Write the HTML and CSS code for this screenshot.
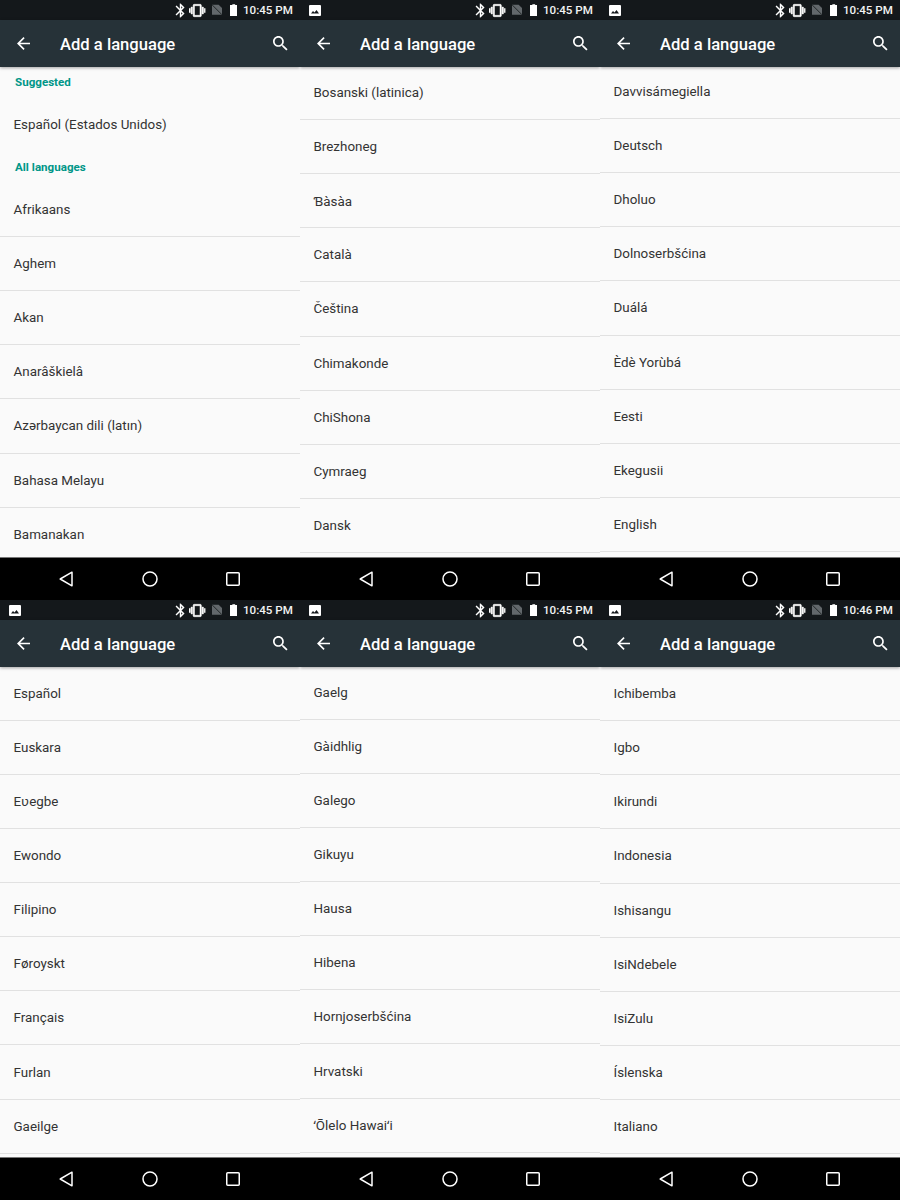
FILE: index.html
```html
<!DOCTYPE html>
<html lang="en">
<head>
<meta charset="utf-8">
<title>Add a language</title>
<link rel="stylesheet" href="styles.css">
</head>
<body>
<svg class="defs" width="0" height="0" aria-hidden="true">
  <symbol id="i-back" viewBox="4 4 16 16"><path d="M20 11H7.83l5.59-5.59L12 4l-8 8 8 8 1.41-1.41L7.83 13H20v-2z"/></symbol>
  <symbol id="i-search" viewBox="3 3 18 18"><path d="M15.5 14h-.79l-.28-.27C15.41 12.59 16 11.11 16 9.5 16 5.91 13.09 3 9.5 3S3 5.91 3 9.5 5.91 16 9.5 16c1.61 0 3.09-.59 4.23-1.57l.27.28v.79l5 4.99L20.49 19l-4.99-5zm-6 0C7.01 14 5 11.99 5 9.5S7.01 5 9.5 5 14 7.01 14 9.5 11.99 14 9.5 14z"/></symbol>
  <symbol id="i-bt" viewBox="0 0 24 24"><path d="M17.71 7.71L12 2h-1v7.59L6.41 5 5 6.41 10.59 12 5 17.59 6.41 19 11 14.41V22h1l5.71-5.71-4.3-4.29 4.3-4.29zM13 5.83l1.88 1.88L13 9.59V5.83zm1.88 10.46L13 18.17v-3.76l1.88 1.88z"/></symbol>
  <symbol id="i-vib" viewBox="0 0 24 24"><path stroke="#fff" stroke-width=".7" d="M0 15h2V9H0v6zm3 2h2V7H3v10zm19-8v6h2V9h-2zm-3 8h2V7h-2v10zM16.5 3h-9C6.67 3 6 3.67 6 4.5v15c0 .83.67 1.5 1.5 1.5h9c.83 0 1.5-.67 1.5-1.5v-15c0-.83-.67-1.5-1.5-1.5zM16 19H8V5h8v14z"/></symbol>
  <symbol id="i-sim" viewBox="0 0 12 12"><path fill="#62676b" d="M0 0h8l4 4v8H0z"/><path fill="none" stroke="#14181b" stroke-width="1" d="M0 0l12 12"/></symbol>
  <symbol id="i-bat" viewBox="0 0 8 13"><path d="M2.5 0h3v1H8v12H0V1h2.5z"/></symbol>
  <symbol id="i-pic" viewBox="0 0 12 11"><path fill="#fff" d="M1 0h10a1 1 0 0 1 1 1v9a1 1 0 0 1-1 1H1a1 1 0 0 1-1-1V1a1 1 0 0 1 1-1z"/><path fill="#14181b" d="M2 8.5l2-2.5 1.5 1.5L7.5 5 10 8.5z"/></symbol>
  <symbol id="i-tri" viewBox="0 0 14 16"><path fill="none" stroke="#fff" stroke-width="1.5" stroke-linejoin="round" d="M13 1.2v13.6L1.2 8z"/></symbol>
  <symbol id="i-circle" viewBox="0 0 16 16"><circle cx="8" cy="8" r="7" fill="none" stroke="#fff" stroke-width="1.5"/></symbol>
  <symbol id="i-square" viewBox="0 0 14 14"><rect x=".75" y=".75" width="12.5" height="12.5" rx="1" fill="none" stroke="#fff" stroke-width="1.5"/></symbol>
</svg>

<main class="grid">

<section class="phone">
  <div class="status">
    <span class="spacer"></span>
    <svg class="s-bt"><use href="#i-bt"/></svg><svg class="s-vib"><use href="#i-vib"/></svg><svg class="s-sim"><use href="#i-sim"/></svg><svg class="s-bat"><use href="#i-bat"/></svg><span class="time">10:45 PM</span>
  </div>
  <header class="toolbar"><svg class="back"><use href="#i-back"/></svg><h1>Add a language</h1><svg class="search"><use href="#i-search"/></svg></header>
  <ul class="list">
    <li class="head first">Suggested</li>
    <li class="row plain">Español (Estados Unidos)</li>
    <li class="head second">All languages</li>
    <li class="row">Afrikaans</li>
    <li class="row">Aghem</li>
    <li class="row">Akan</li>
    <li class="row">Anarâškielâ</li>
    <li class="row">Azərbaycan dili (latın)</li>
    <li class="row">Bahasa Melayu</li>
    <li class="row">Bamanakan</li>
  </ul>
  <nav class="nav"><svg class="n-tri"><use href="#i-tri"/></svg><svg class="n-circle"><use href="#i-circle"/></svg><svg class="n-square"><use href="#i-square"/></svg></nav>
</section>

<section class="phone">
  <div class="status">
    <svg class="s-pic"><use href="#i-pic"/></svg><span class="spacer"></span>
    <svg class="s-bt"><use href="#i-bt"/></svg><svg class="s-vib"><use href="#i-vib"/></svg><svg class="s-sim"><use href="#i-sim"/></svg><svg class="s-bat"><use href="#i-bat"/></svg><span class="time">10:45 PM</span>
  </div>
  <header class="toolbar"><svg class="back"><use href="#i-back"/></svg><h1>Add a language</h1><svg class="search"><use href="#i-search"/></svg></header>
  <ul class="list scroll-b">
    <li class="row">Bosanski (latinica)</li>
    <li class="row">Brezhoneg</li>
    <li class="row">Ɓàsàa</li>
    <li class="row">Català</li>
    <li class="row">Čeština</li>
    <li class="row">Chimakonde</li>
    <li class="row">ChiShona</li>
    <li class="row">Cymraeg</li>
    <li class="row">Dansk</li>
  </ul>
  <nav class="nav"><svg class="n-tri"><use href="#i-tri"/></svg><svg class="n-circle"><use href="#i-circle"/></svg><svg class="n-square"><use href="#i-square"/></svg></nav>
</section>

<section class="phone">
  <div class="status">
    <svg class="s-pic"><use href="#i-pic"/></svg><span class="spacer"></span>
    <svg class="s-bt"><use href="#i-bt"/></svg><svg class="s-vib"><use href="#i-vib"/></svg><svg class="s-sim"><use href="#i-sim"/></svg><svg class="s-bat"><use href="#i-bat"/></svg><span class="time">10:45 PM</span>
  </div>
  <header class="toolbar"><svg class="back"><use href="#i-back"/></svg><h1>Add a language</h1><svg class="search"><use href="#i-search"/></svg></header>
  <ul class="list scroll-c">
    <li class="row">Davvisámegiella</li>
    <li class="row">Deutsch</li>
    <li class="row">Dholuo</li>
    <li class="row">Dolnoserbšćina</li>
    <li class="row">Duálá</li>
    <li class="row">Èdè Yorùbá</li>
    <li class="row">Eesti</li>
    <li class="row">Ekegusii</li>
    <li class="row">English</li>
  </ul>
  <nav class="nav"><svg class="n-tri"><use href="#i-tri"/></svg><svg class="n-circle"><use href="#i-circle"/></svg><svg class="n-square"><use href="#i-square"/></svg></nav>
</section>

<section class="phone">
  <div class="status">
    <svg class="s-pic"><use href="#i-pic"/></svg><span class="spacer"></span>
    <svg class="s-bt"><use href="#i-bt"/></svg><svg class="s-vib"><use href="#i-vib"/></svg><svg class="s-sim"><use href="#i-sim"/></svg><svg class="s-bat"><use href="#i-bat"/></svg><span class="time">10:45 PM</span>
  </div>
  <header class="toolbar"><svg class="back"><use href="#i-back"/></svg><h1>Add a language</h1><svg class="search"><use href="#i-search"/></svg></header>
  <ul class="list scroll-d">
    <li class="row">Español</li>
    <li class="row">Euskara</li>
    <li class="row">Eʋegbe</li>
    <li class="row">Ewondo</li>
    <li class="row">Filipino</li>
    <li class="row">Føroyskt</li>
    <li class="row">Français</li>
    <li class="row">Furlan</li>
    <li class="row">Gaeilge</li>
  </ul>
  <nav class="nav"><svg class="n-tri"><use href="#i-tri"/></svg><svg class="n-circle"><use href="#i-circle"/></svg><svg class="n-square"><use href="#i-square"/></svg></nav>
</section>

<section class="phone">
  <div class="status">
    <svg class="s-pic"><use href="#i-pic"/></svg><span class="spacer"></span>
    <svg class="s-bt"><use href="#i-bt"/></svg><svg class="s-vib"><use href="#i-vib"/></svg><svg class="s-sim"><use href="#i-sim"/></svg><svg class="s-bat"><use href="#i-bat"/></svg><span class="time">10:45 PM</span>
  </div>
  <header class="toolbar"><svg class="back"><use href="#i-back"/></svg><h1>Add a language</h1><svg class="search"><use href="#i-search"/></svg></header>
  <ul class="list scroll-e">
    <li class="row">Gaelg</li>
    <li class="row">Gàidhlig</li>
    <li class="row">Galego</li>
    <li class="row">Gikuyu</li>
    <li class="row">Hausa</li>
    <li class="row">Hibena</li>
    <li class="row">Hornjoserbšćina</li>
    <li class="row">Hrvatski</li>
    <li class="row">ʻŌlelo Hawaiʻi</li>
  </ul>
  <nav class="nav"><svg class="n-tri"><use href="#i-tri"/></svg><svg class="n-circle"><use href="#i-circle"/></svg><svg class="n-square"><use href="#i-square"/></svg></nav>
</section>

<section class="phone">
  <div class="status">
    <svg class="s-pic"><use href="#i-pic"/></svg><span class="spacer"></span>
    <svg class="s-bt"><use href="#i-bt"/></svg><svg class="s-vib"><use href="#i-vib"/></svg><svg class="s-sim"><use href="#i-sim"/></svg><svg class="s-bat"><use href="#i-bat"/></svg><span class="time">10:46 PM</span>
  </div>
  <header class="toolbar"><svg class="back"><use href="#i-back"/></svg><h1>Add a language</h1><svg class="search"><use href="#i-search"/></svg></header>
  <ul class="list scroll-f">
    <li class="row">Ichibemba</li>
    <li class="row">Igbo</li>
    <li class="row">Ikirundi</li>
    <li class="row">Indonesia</li>
    <li class="row">Ishisangu</li>
    <li class="row">IsiNdebele</li>
    <li class="row">IsiZulu</li>
    <li class="row">Íslenska</li>
    <li class="row">Italiano</li>
  </ul>
  <nav class="nav"><svg class="n-tri"><use href="#i-tri"/></svg><svg class="n-circle"><use href="#i-circle"/></svg><svg class="n-square"><use href="#i-square"/></svg></nav>
</section>

</main>
</body>
</html>
```

FILE: styles.css
```css
* { box-sizing: border-box; }
html, body { margin: 0; padding: 0; background: #000; }
body { font-family: Roboto, "Noto Sans", "DejaVu Sans", sans-serif; width: 900px; height: 1200px; overflow: hidden; }
.defs { display: block; height: 0; }
.grid { display: grid; grid-template-columns: repeat(3, 300px); grid-auto-rows: 600px; }
.phone { display: flex; flex-direction: column; height: 600px; overflow: hidden; background: #fafafa; }

.status { flex: 0 0 20px; height: 20px; display: flex; align-items: center; padding: 0 7px 0 9px; background: #14181b; fill: #fff; }
.spacer { flex: 1; }
.status svg { flex: none; }
.s-pic { width: 12px; height: 11px; }
.s-bt { width: 17px; height: 17px; }
.s-vib { width: 16.5px; height: 17px; margin-left: .5px; }
.s-sim { width: 10px; height: 11.5px; margin-left: 6.5px; }
.s-bat { width: 7.5px; height: 12.5px; margin-left: 7.5px; }
.time { width: 50px; margin-left: 6px; font-size: 11.6px; font-weight: 500; color: #f2f3f3; white-space: nowrap; }

.toolbar { flex: 0 0 47px; display: flex; align-items: center; padding: 0 10px 0 17px; background: #263238; fill: #fff; position: relative; z-index: 1; box-shadow: 0 1px 3px rgba(0, 0, 0, .35); }
.toolbar h1 { margin: 0 0 0 30px; flex: 1; padding-top: 2px; font-size: 16.6px; font-weight: 500; color: #fff; line-height: 24px; }
.back { width: 13px; height: 13px; margin-top: -1px; }
.search { width: 15px; height: 15px; margin-right: 2px; }

.list { flex: 1; min-height: 0; margin: 0; padding: 0; list-style: none; overflow: hidden; background: #fafafa; }
.row { height: 54.15px; display: flex; align-items: center; padding-left: 13.5px; font-size: 13.4px; color: #333; border-bottom: 1px solid #e1e1e1; }
.row.plain { border-bottom: 0; }
.head { display: flex; align-items: center; padding-left: 15px; font-size: 11.6px; font-weight: 700; color: #009688; }
.head.first { height: 30.7px; }
.head.second { height: 31px; }

.scroll-b > :first-child { margin-top: -1.2px; }
.scroll-c > :first-child { margin-top: -2.2px; }
.scroll-d > :first-child { margin-top: -.5px; }
.scroll-e > :first-child { margin-top: -1.5px; }
.scroll-f > :first-child { margin-top: 0; }

.nav { flex: 0 0 43px; display: flex; align-items: center; justify-content: center; padding: 0 1px 1px 0; background: #000; border-top: 1px solid #777; }
.nav svg { flex: none; }
.n-tri { width: 14px; height: 16px; margin-right: 69px; }
.n-circle { width: 16px; height: 16px; }
.n-square { width: 14px; height: 14px; margin-left: 68px; }
```
